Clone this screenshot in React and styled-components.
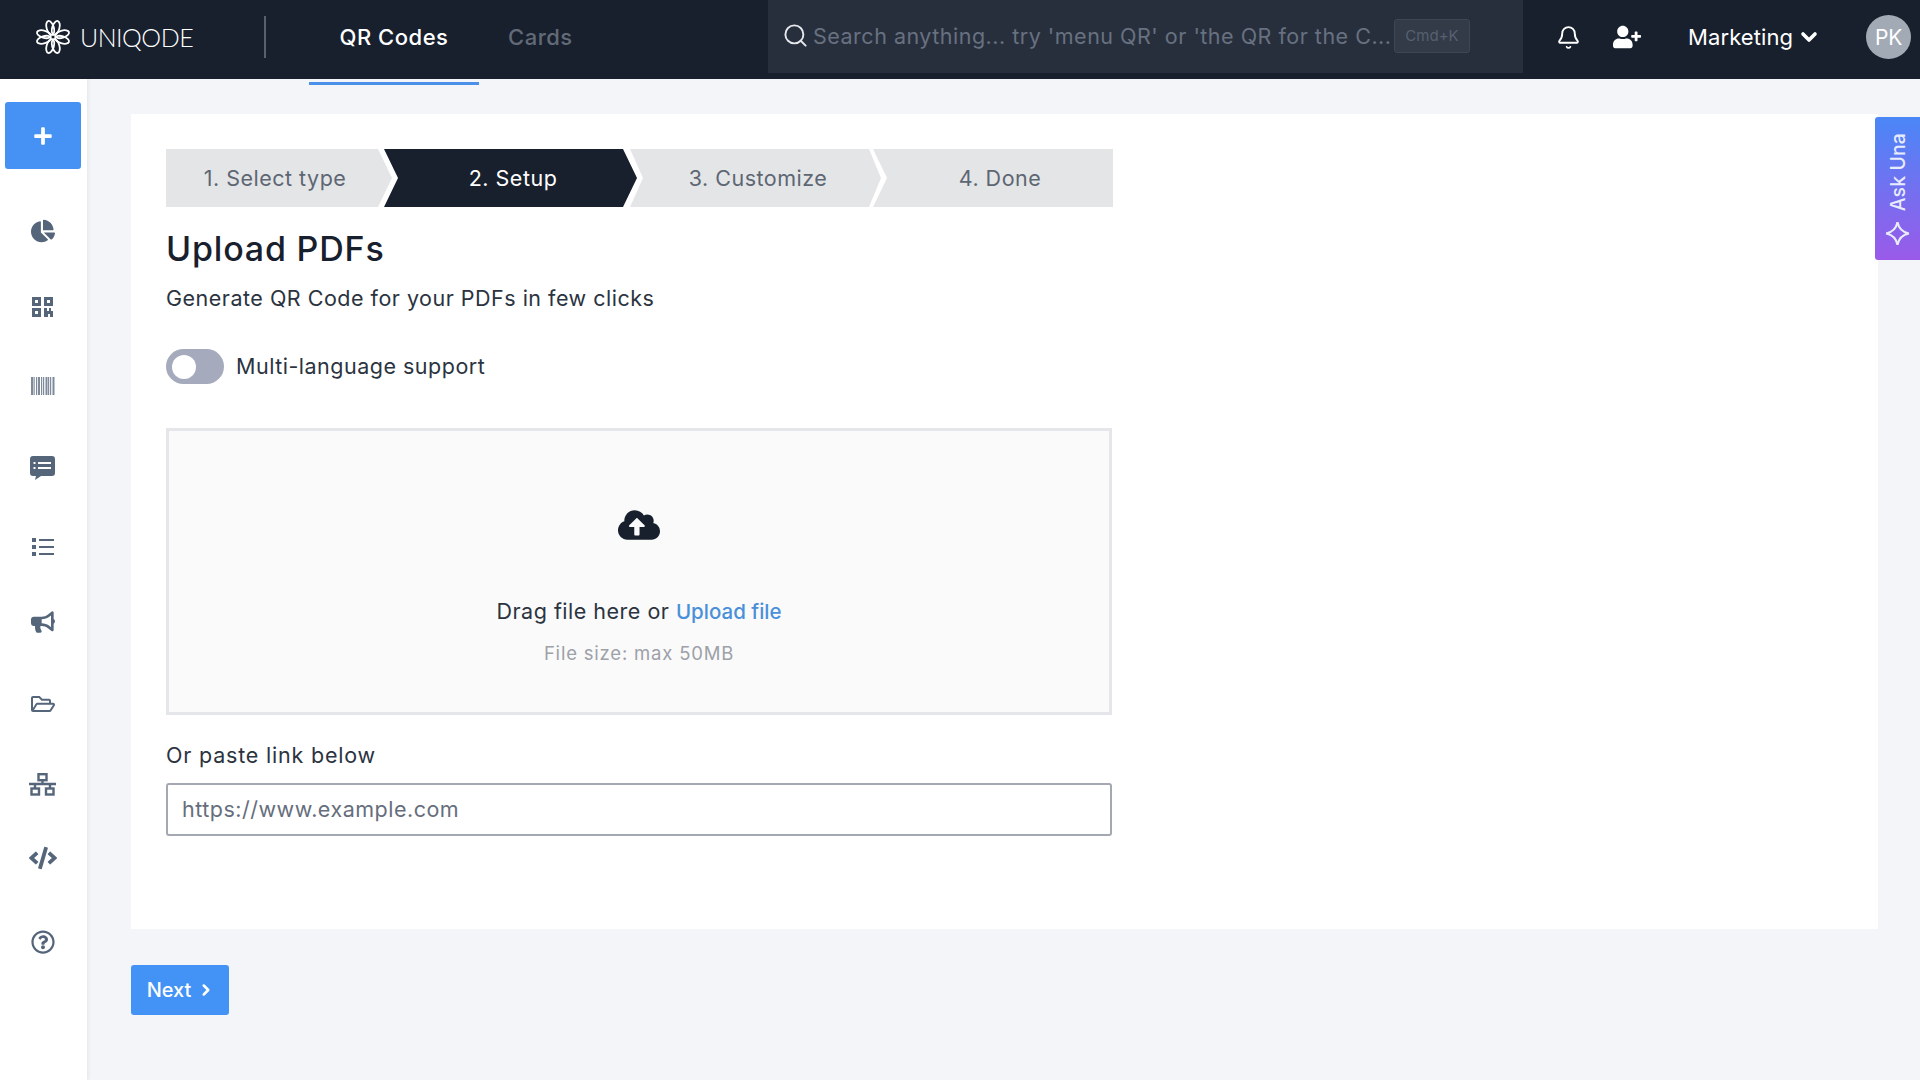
import React from 'react'
import styled, { createGlobalStyle } from 'styled-components'
import {
  FaBullhorn, FaChartPie, FaCloudUploadAlt, FaCode,
  FaPlus, FaRegFolderOpen, FaRegQuestionCircle, FaUserPlus,
} from 'react-icons/fa'
import { Bell, ChevronDown, ChevronRight, Search } from 'lucide-react'

const FONT = 'Inter, "Open Sans", "Liberation Sans", sans-serif'

const GlobalStyle = createGlobalStyle`
  html, body { margin: 0; padding: 0; background: #f3f5f8; }
  body { font-family: ${FONT}; letter-spacing: 0.5px; overflow: hidden; }
  * { box-sizing: border-box; }
`

const Page = styled.div`
  width: 1920px;
  height: 1080px;
  position: relative;
  overflow: hidden;
  display: flex;
  flex-direction: column;
`

const Header = styled.header`
  height: 79px;
  flex: none;
  padding-bottom: 5px;
  display: flex;
  align-items: center;
  background: #18202d;
  color: #fff;
`

const Brand = styled.div`
  width: 264px;
  padding-left: 35px;
  display: flex;
  align-items: center;
  gap: 9px;
`

const BrandName = styled.span`
  font-family: Lato, sans-serif;
  font-weight: 300;
  font-size: 25px;
  letter-spacing: -0.5px;
`

const Divider = styled.div`
  width: 2px;
  height: 42px;
  background: #59606c;
`

const Tabs = styled.nav`
  display: flex;
  align-items: center;
  margin-left: 43px;
  width: 459px;
  height: 100%;
`

const Tab = styled.a`
  position: relative;
  width: ${p => (p.$active ? '170px' : 'auto')};
  margin-right: ${p => (p.$active ? '29px' : '0')};
  text-align: center;
  font-size: 22px;
  font-weight: 500;
  color: ${p => (p.$active ? '#fff' : '#626a77')};

  ${p => p.$active && `
    &::after {
      content: '';
      position: absolute;
      left: 0;
      right: 0;
      top: 58px;
      height: 3px;
      background: #4a90e8;
    }
  `}
`

const SearchBox = styled.div`
  align-self: flex-start;
  width: 755px;
  height: 73px;
  padding: 0 0 2px 14px;
  display: flex;
  align-items: center;
  background: #272f3d;
  color: #e6e8ec;
`

const SearchHint = styled.span`
  margin-left: 4px;
  width: 577px;
  font-size: 21.5px;
  white-space: nowrap;
  color: #687180;
`

const Kbd = styled.span`
  margin-left: 4px;
  width: 76px;
  height: 34px;
  display: flex;
  align-items: center;
  justify-content: center;
  border-radius: 3px;
  font-size: 15px;
  letter-spacing: 0;
  color: #566070;
  background: #333b49;
  border: 1px solid #3f4755;
`

const HeaderIcons = styled.div`
  margin-left: 33px;
  display: flex;
  align-items: center;
  gap: 32px;
  width: 132px;
`

const Workspace = styled.button`
  padding: 0;
  border: 0;
  background: none;
  font: inherit;
  font-size: 22px;
  letter-spacing: 0.1px;
  color: #fff;
  display: flex;
  align-items: center;
  gap: 4px;
`

const Avatar = styled.div`
  margin-left: 45px;
  width: 45px;
  height: 44px;
  border-radius: 50%;
  background: #a2aab6;
  display: flex;
  align-items: center;
  justify-content: center;
  font-size: 21px;
  letter-spacing: 0;
  color: #fff;
`

const Body = styled.div`
  flex: 1;
  display: flex;
  min-height: 0;
`

const Sidebar = styled.aside`
  width: 87px;
  flex: none;
  background: #fff;
  box-shadow: 1px 0 4px rgba(40, 50, 70, 0.08);
  padding: 23px 1.500px 0 0;
  display: flex;
  flex-direction: column;
  align-items: center;
`

const CreateButton = styled.button`
  width: 76px;
  height: 67px;
  border: 0;
  border-radius: 3px;
  background: #4692f4;
  color: #fff;
  display: flex;
  align-items: center;
  justify-content: center;
  font-size: 20px;
  margin-bottom: 25px;
`

const SideItem = styled.div`
  height: ${p => p.$h}px;
  display: flex;
  align-items: center;
  justify-content: center;
  color: #55657a;
  font-size: 24px;
`

const Main = styled.main`
  flex: 1;
  padding: 35px 42px 0 44px;
`

const Card = styled.section`
  height: 815px;
  background: #fff;
  padding: 35px 35px 0;
`

const Stepper = styled.div`
  width: 948px;
  height: 58px;
  display: flex;
`

const Step = styled.div`
  width: ${p => p.$w}px;
  margin-left: ${p => p.$overlap || 0}px;
  flex: none;
  display: flex;
  align-items: center;
  justify-content: center;
  font-size: 21.5px;
  background: ${p => (p.$active ? '#18202d' : '#e3e5e7')};
  color: ${p => (p.$active ? '#fff' : '#5e6673')};
  padding: ${p => p.$pad || '0'};
  clip-path: ${p => p.$clip};
`

const Title = styled.h1`
  margin: 21px 0 0;
  font-size: 34px;
  line-height: 42px;
  font-weight: 500;
  letter-spacing: 0.8px;
  color: #18202d;
`

const Subtitle = styled.p`
  margin: 14px 0 0;
  font-size: 21.5px;
  line-height: 28px;
  color: #2b3340;
`

const ToggleRow = styled.div`
  margin-top: 37px;
  height: 35px;
  display: flex;
  align-items: center;
  gap: 12px;
  font-size: 21.5px;
  color: #2b3340;
`

const ToggleLabel = styled.span`
  padding-bottom: 2px;
`

const Toggle = styled.span`
  width: 58px;
  height: 35px;
  border-radius: 18px;
  background: #a5abbd;
  padding: 5.5px 6px;
  display: block;

  &::before {
    content: '';
    display: block;
    width: 24px;
    height: 24px;
    border-radius: 50%;
    background: #fff;
  }
`

const Dropzone = styled.div`
  margin-top: 44px;
  width: 946px;
  height: 287px;
  border: 3px solid #e4e6e9;
  background: #fafafb;
  display: flex;
  flex-direction: column;
  align-items: center;
  color: #18202d;
  padding-top: 73px;
`

const DropText = styled.div`
  margin-top: 51px;
  font-size: 21.5px;
  line-height: 28px;
  color: #2b3340;

  a { color: #4a90d9; font-size: 20.5px; font-weight: 500; letter-spacing: 0; }
`

const DropHint = styled.div`
  margin-top: 15px;
  font-size: 18.5px;
  line-height: 24px;
  letter-spacing: 0.8px;
  color: #9da1a8;
`

const Label = styled.label`
  display: block;
  margin-top: 26px;
  font-size: 21.5px;
  line-height: 28px;
  letter-spacing: 0.8px;
  color: #2b3340;
`

const LinkInput = styled.input`
  display: block;
  margin-top: 14px;
  width: 946px;
  height: 53px;
  padding: 0 14px 2px;
  border: 2px solid #a4a8b2;
  border-radius: 3px;
  background: #fff;
  font: inherit;
  font-size: 21.5px;
  letter-spacing: 0.5px;

  &::placeholder { color: #666e7d; opacity: 1; }
`

const NextButton = styled.button`
  margin-top: 36px;
  width: 98px;
  height: 50px;
  padding: 0 0 0 2px;
  border: 0;
  border-radius: 3px;
  background: #4293f5;
  color: #fff;
  font: inherit;
  font-size: 20px;
  font-weight: 500;
  letter-spacing: 0;
  display: flex;
  align-items: center;
  justify-content: center;
  gap: 6px;
`

const AskUna = styled.div`
  position: absolute;
  top: 117px;
  right: 0;
  width: 45px;
  height: 143px;
  border-radius: 3px 0 0 3px;
  background: linear-gradient(180deg, #4a87f7 0%, #9a5ae9 100%);
  color: #e9ecff;
  display: flex;
  flex-direction: column-reverse;
  align-items: center;
  justify-content: flex-start;
  padding: 14px 0 13px;
  gap: 9px;
`

const AskLabel = styled.span`
  writing-mode: vertical-rl;
  transform: rotate(180deg);
  font-size: 19.5px;
  font-weight: 500;
  letter-spacing: 0.1px;
`

const petals = [-17, 17, 73, 107, 163, 197, 253, 287]

const Logo = () => (
  <svg width="36" height="36" viewBox="0 0 36 36" fill="none" stroke="#fff" strokeWidth="1.8">
    {petals.map(a => (
      <ellipse key={a} cx="18" cy="8.5" rx="3.6" ry="7.2" transform={`rotate(${a} 18 18)`} />
    ))}
  </svg>
)

const QrIcon = () => (
  <svg width="22" height="20" viewBox="0 0 22 20" fill="currentColor">
    <path fillRule="evenodd" d="M0 0h9v9H0zM3 3v3h3V3zM12 0h9v9h-9zM15 3v3h3V3zM0 11h9v9H0zM3 14v3h3v-3z" />
    <path d="M12 11h3v3h2v-3h2v3h2v6h-3v-3h-2v3h-4z" />
  </svg>
)

const BarcodeIcon = () => (
  <svg width="24" height="18" viewBox="0 0 24 18" fill="currentColor" opacity="0.75">
    {[0, 2.5, 5, 7, 10, 12, 14.5, 17, 19, 21.5].map((x, i) => (
      <rect key={x} x={x} y="0" width={i % 3 === 0 ? 2 : 1.2} height="18" />
    ))}
  </svg>
)

const MessageIcon = () => (
  <svg width="25" height="25" viewBox="0 0 25 25">
    <path fill="currentColor" d="M3 0h19a3 3 0 0 1 3 3v14a3 3 0 0 1-3 3H11l-6 4 1-4H3a3 3 0 0 1-3-3V3a3 3 0 0 1 3-3z" />
    <path stroke="#fff" strokeWidth="2" d="M8 7h13M8 12h13" />
    <path stroke="#fff" strokeWidth="2" d="M3.500 7h2M3.500 12h2" />
  </svg>
)

const ListIcon = () => (
  <svg width="22" height="18" viewBox="0 0 22 18" fill="currentColor">
    <rect x="0" y="0" width="4" height="4" />
    <rect x="0" y="7" width="4" height="4" />
    <rect x="0" y="14" width="4" height="4" />
    <rect x="7" y="1" width="15" height="2" />
    <rect x="7" y="8" width="15" height="2" />
    <rect x="7" y="15" width="15" height="2" />
  </svg>
)

const SitemapIcon = () => (
  <svg width="27" height="23" viewBox="0 0 27 23" fill="none" stroke="currentColor" strokeWidth="2.4">
    <rect x="9.500" y="1.200" width="8" height="6" />
    <path d="M13.500 7v5M0 11h27" />
    <rect x="2.500" y="15.500" width="7.500" height="6" />
    <rect x="17" y="15.500" width="7.500" height="6" />
    <path d="M6 11v4M21 11v4" />
  </svg>
)

const StarIcon = () => (
  <svg width="27" height="27" viewBox="0 0 25 25" fill="none" stroke="currentColor" strokeWidth="2">
    <path d="M12.500 2c1.200 6 4.500 9.300 10.500 10.500c-6 1.200-9.300 4.500-10.500 10.500c-1.200-6-4.500-9.300-10.500-10.500c6-1.200 9.300-4.500 10.500-10.500z" />
  </svg>
)

const steps = [
  { label: '1. Select type', w: 226, clip: 'polygon(0 0, 212px 0, 226px 50%, 212px 100%, 0 100%)', pad: '0 8px 0 0' },
  { label: '2. Setup', w: 253, overlap: -8, active: true, pad: '0 0 0 5px', clip: 'polygon(0 0, 239px 0, 253px 50%, 239px 100%, 0 100%, 14px 50%)' },
  { label: '3. Customize', w: 251, overlap: -7, pad: '0 0 0 5px', clip: 'polygon(0 0, 239px 0, 251px 50%, 239px 100%, 0 100%, 13px 50%)' },
  { label: '4. Done', w: 240, overlap: -8, clip: 'polygon(0 0, 100% 0, 100% 100%, 0 100%, 14px 50%)', pad: '0 0 0 14px' },
]

const sideItems = [
  { h: 74, icon: <FaChartPie /> },
  { h: 78, icon: <QrIcon /> },
  { h: 80, icon: <BarcodeIcon /> },
  { h: 84, icon: <MessageIcon /> },
  { h: 74, icon: <ListIcon /> },
  { h: 76, icon: <FaBullhorn /> },
  { h: 88, icon: <FaRegFolderOpen /> },
  { h: 72, icon: <SitemapIcon /> },
  { h: 76, icon: <FaCode size={28} /> },
  { h: 92, icon: <FaRegQuestionCircle /> },
]

export default function App() {
  return (
    <>
      <GlobalStyle />
      <Page>
        <Header>
          <Brand>
            <Logo />
            <BrandName>UNIQODE</BrandName>
          </Brand>
          <Divider />
          <Tabs>
            <Tab $active>QR Codes</Tab>
            <Tab>Cards</Tab>
          </Tabs>
          <SearchBox>
            <Search size={27} strokeWidth={1.7} />
            <SearchHint>Search anything... try 'menu QR' or 'the QR for the C...</SearchHint>
            <Kbd>Cmd+K</Kbd>
          </SearchBox>
          <HeaderIcons>
            <Bell size={25} strokeWidth={1.8} />
            <FaUserPlus size={28} />
          </HeaderIcons>
          <Workspace>
            Marketing <ChevronDown size={24} strokeWidth={3.6} />
          </Workspace>
          <Avatar>PK</Avatar>
        </Header>
        <Body>
          <Sidebar>
            <CreateButton><FaPlus /></CreateButton>
            {sideItems.map((item, i) => (
              <SideItem key={i} $h={item.h}>{item.icon}</SideItem>
            ))}
          </Sidebar>
          <Main>
            <Card>
              <Stepper>
                {steps.map(s => (
                  <Step key={s.label} $w={s.w} $overlap={s.overlap} $active={s.active} $clip={s.clip} $pad={s.pad}>
                    {s.label}
                  </Step>
                ))}
              </Stepper>
              <Title>Upload PDFs</Title>
              <Subtitle>Generate QR Code for your PDFs in few clicks</Subtitle>
              <ToggleRow>
                <Toggle />
                <ToggleLabel>Multi-language support</ToggleLabel>
              </ToggleRow>
              <Dropzone>
                <FaCloudUploadAlt size={42} />
                <DropText>Drag file here or <a>Upload file</a></DropText>
                <DropHint>File size: max 50MB</DropHint>
              </Dropzone>
              <Label>Or paste link below</Label>
              <LinkInput placeholder="https://www.example.com" />
            </Card>
            <NextButton>Next <ChevronRight size={18} strokeWidth={3.4} /></NextButton>
          </Main>
        </Body>
        <AskUna>
          <StarIcon />
          <AskLabel>Ask Una</AskLabel>
        </AskUna>
      </Page>
    </>
  )
}
